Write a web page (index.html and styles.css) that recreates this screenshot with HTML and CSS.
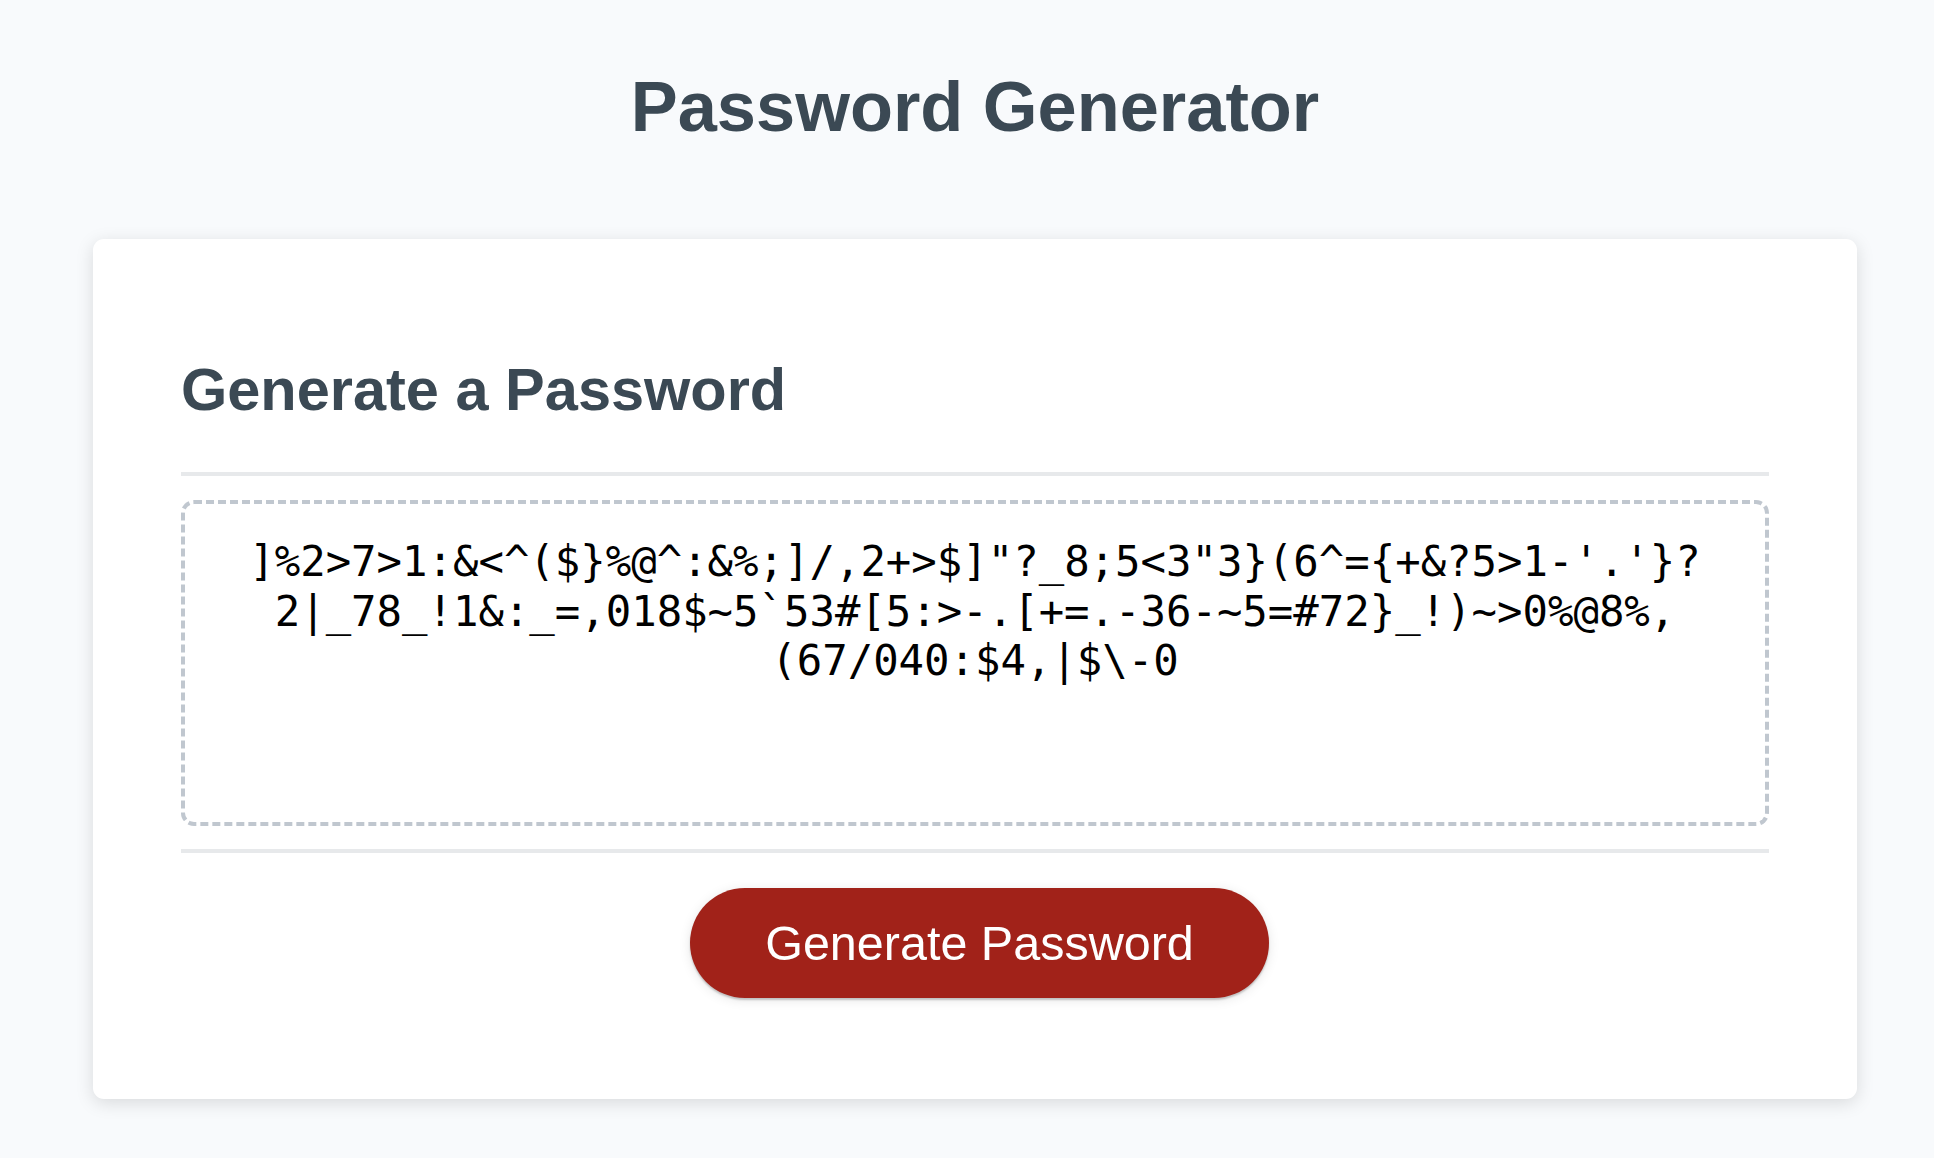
FILE: index.html
```html
<!DOCTYPE html>
<html lang="en">
<head>
<meta charset="UTF-8">
<title>Password Generator</title>
<link rel="stylesheet" href="styles.css">
</head>
<body>
<div class="wrapper">
  <header class="page-header">
    <h1>Password Generator</h1>
  </header>
  <div class="card">
    <div class="card-header">
      <h2>Generate a Password</h2>
    </div>
    <div class="card-body">
      <div class="password" id="password"><span class="pw-line">]%2&gt;7&gt;1:&amp;&lt;^($}%@^:&amp;%;]/,2+&gt;$]"?_8;5&lt;3"3}(6^={+&amp;?5&gt;1-'.'}?</span><span class="pw-line">2|_78_!1&amp;:_=,018$~5`53#[5:&gt;-.[+=.-36-~5=#72}_!)~&gt;0%@8%,</span><span class="pw-line">(67/040:$4,|$\-0</span></div>
    </div>
    <div class="card-footer">
      <button class="btn" id="generate">Generate Password</button>
    </div>
  </div>
</div>
</body>
</html>
```
FILE: styles.css
```css
*, *::before, *::after {
  box-sizing: border-box;
}

html, body {
  margin: 0;
  padding: 0;
}

body {
  font-family: "Liberation Sans", Arial, sans-serif;
  background-color: #f8fafc;
  min-height: 1158px;
}

.wrapper {
  width: 1764px;
  margin-left: 93px;
  padding-bottom: 59px;
}

.page-header {
  text-align: center;
  padding-top: 66px;
  padding-bottom: 91px;
  color: #3b4954;
}

.page-header h1 {
  margin: 0;
  font-size: 70.4px;
  line-height: 82px;
  font-weight: bold;
}

.card {
  background-color: #ffffff;
  border-radius: 11px;
  box-shadow: rgba(0, 0, 0, 0.13) 0 4px 18px 0;
  color: #3b4954;
  padding: 66px 88px;
}

.card-header h2 {
  margin: 50px 0 48px;
  font-size: 59.5px;
  line-height: 69px;
  font-weight: bold;
}

.card-header::after,
.card-footer::before {
  content: "";
  display: block;
  width: 100%;
  height: 4px;
  background: #e7e9eb;
}

.card-body {
  padding: 24px 0 23px;
}

.password {
  height: 326px;
  border: 4px dashed #c0c7cf;
  border-radius: 13px;
  padding: 33px 33px 0;
  overflow: hidden;
  text-align: center;
  font-family: "DejaVu Sans Mono", "Liberation Mono", monospace;
  font-size: 42.3px;
  line-height: 49.5px;
  color: #000000;
}

.pw-line {
  display: block;
  white-space: pre;
}

.card-footer {
  text-align: center;
}

.btn {
  border: none;
  background-color: #a12219;
  border-radius: 56px;
  box-shadow: rgba(0, 0, 0, 0.1) 0 2px 12px 0, rgba(0, 0, 0, 0.2) 0 2px 2px 0;
  color: #ffffff;
  display: inline-block;
  font-family: "Liberation Sans", Arial, sans-serif;
  font-size: 48.5px;
  line-height: 48px;
  margin: 35px 35px 35px 44px;
  padding: 31px 75px;
  text-align: center;
  cursor: pointer;
}
```
